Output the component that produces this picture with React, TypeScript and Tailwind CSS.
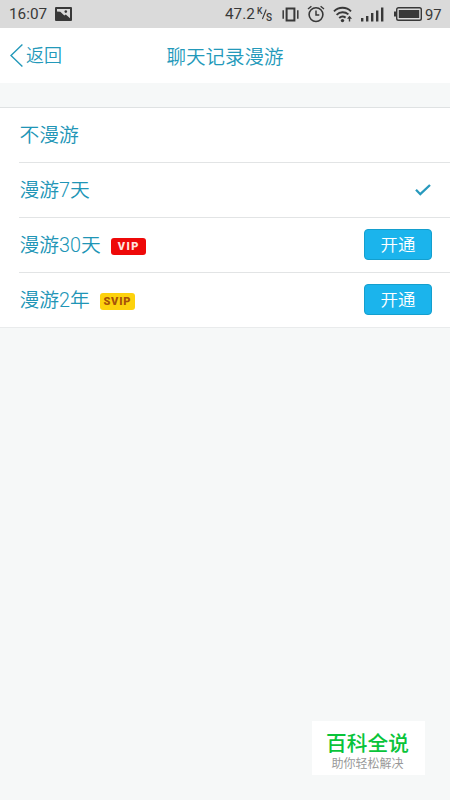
import type { ReactNode } from "react";

type RoamingOption = {
  label: string;
  selected?: boolean;
  badge?: "VIP" | "SVIP";
};

const OPTIONS: RoamingOption[] = [
  { label: "不漫游" },
  { label: "漫游7天", selected: true },
  { label: "漫游30天", badge: "VIP" },
  { label: "漫游2年", badge: "SVIP" },
];

function StatusBar() {
  return (
    <div className="flex h-7 items-center bg-[#dadada] text-[#383838] font-[Roboto,sans-serif]">
      <span className="ml-[9px] w-[38px] text-[15.3px] leading-7 whitespace-nowrap">16:07</span>
      {/* picture notification */}
      <svg className="ml-2 h-[14px] w-[17px]" viewBox="0 0 17 14">
        <rect width="17" height="14" rx="1" fill="#383838" />
        <path d="M2 2H15V11.2L10.8 7.6L9.3 8.6L5.3 4.8L2 4.6Z" fill="#dadada" />
        <circle cx="10.8" cy="4.6" r="1.3" fill="#383838" />
      </svg>
      <span className="ml-[153px] w-[30px] text-[15.3px] leading-7 whitespace-nowrap">47.2</span>
      {/* network speed unit */}
      <svg className="ml-[2px] h-4 w-4" viewBox="0 0 16 16" fill="#383838">
        <text x="0" y="8" fontSize="8.5" fontWeight="500">K</text>
        <path d="M9.2 3.5L5.4 13" stroke="#383838" strokeWidth="1.1" />
        <text x="9" y="14.5" fontSize="10" fontWeight="500">S</text>
      </svg>
      {/* vibrate */}
      <svg className="ml-[9px] h-[15px] w-[17px]" viewBox="0 0 17 15" fill="none" stroke="#383838">
        <rect x="4.6" y="1.5" width="7.8" height="12" strokeWidth="2" />
        <path d="M1.2 3.2V11.8M15.8 3.2V11.8" strokeWidth="1.5" />
      </svg>
      {/* alarm */}
      <svg className="ml-[8px] h-[18px] w-[18px]" viewBox="0 0 18 18" fill="none" stroke="#383838">
        <circle cx="9" cy="9.6" r="6.9" strokeWidth="1.6" />
        <path d="M9 5.6V10.1H12.3" strokeWidth="1.5" />
        <path d="M1 4L4.4 1.2M17 4L13.6 1.2" strokeWidth="1.4" />
      </svg>
      {/* wifi */}
      <svg className="ml-[8px] h-[17px] w-5" viewBox="0 0 20 17" fill="none" stroke="#383838">
        <path d="M1 5.4C5.5 0.6 13.5 0.6 18 5.4" strokeWidth="1.9" />
        <path d="M3.6 8.8C7 5.4 12 5.4 15.4 8.4" strokeWidth="1.9" />
        <path d="M6.2 12C8.2 10.2 10.6 10.2 12.6 11.6" strokeWidth="1.9" />
        <circle cx="9.5" cy="14.6" r="1.7" fill="#383838" stroke="none" />
        <path d="M16.5 11V15.5" strokeWidth="1.4" />
        <path d="M14 12.8L16.5 9.8L19 12.8Z" fill="#383838" stroke="none" />
      </svg>
      {/* signal */}
      <svg className="ml-[8px] h-[15px] w-[23px]" viewBox="0 0 23 15" fill="#383838">
        <rect x="0" y="11" width="2.4" height="3.5" />
        <rect x="5" y="9" width="2.4" height="5.5" />
        <rect x="10" y="6" width="2.4" height="8.5" />
        <rect x="15" y="3.5" width="2.4" height="11" />
        <rect x="20" y="0.5" width="2.4" height="14" />
      </svg>
      {/* battery */}
      <svg className="ml-[10px] h-[14px] w-7" viewBox="0 0 28 14" fill="#383838">
        <rect y="4.5" width="2" height="5" />
        <rect x="2.7" y="0.8" width="24.6" height="12.4" rx="1.8" fill="none" stroke="#383838" strokeWidth="1.4" />
        <rect x="4.8" y="3" width="20.4" height="8" />
      </svg>
      <span className="mt-px ml-[3px] text-[14.8px] leading-7">97</span>
    </div>
  );
}

function Header() {
  return (
    <header className="grid h-[55px] grid-cols-[1fr_auto_1fr] items-center bg-white text-[#2399ba]">
      <div className="flex items-center pl-[10px]">
        <svg className="h-[23px] w-[13px]" viewBox="0 0 13 23" fill="none" stroke="currentColor" strokeWidth="1.4">
          <path d="M12.4 0.5L1 11.5L12.4 22.5" />
        </svg>
        <span className="ml-[3px] text-[18px] leading-7">返回</span>
      </div>
      <h1 className="mt-[4px] text-[19.5px] leading-7">聊天记录漫游</h1>
    </header>
  );
}

function Badge({ kind }: { kind: "VIP" | "SVIP" }) {
  const colors = kind === "VIP" ? "bg-[#ee0909] text-[#ffe3df] tracking-[1.4px] pl-px" : "bg-[#fdd20d] text-[#a75309] tracking-[0.8px]";
  return (
    <span
      className={`mt-[2px] ml-[10px] flex h-[17px] w-[35px] items-center justify-center rounded-[3px] font-[Roboto,sans-serif] text-[11px] leading-none font-black ${colors}`}
    >
      {kind}
    </span>
  );
}

function Row({ label, badge, children }: { label: string; badge?: "VIP" | "SVIP"; children?: ReactNode }) {
  return (
    <li className="ml-[19px] flex h-[55px] items-center border-b border-[#e2e4e5] pr-[18px] last:h-[54px] last:border-b-0">
      <span className="mt-[2px] ml-[0.5px] text-[19.8px] leading-7 text-[#2095b6]">{label}</span>
      {badge && <Badge kind={badge} />}
      <div className="ml-auto">{children}</div>
    </li>
  );
}

export default function App() {
  return (
    <div className="relative h-[800px] w-[450px] overflow-hidden bg-[#f6f8f8] font-[350] font-[Roboto,'Noto_Sans_CJK_SC',sans-serif]">
      <div className="font-normal">
        <StatusBar />
      </div>
      <Header />
      <ul className="mt-[24px] border-t border-b border-t-[#dfe2e3] border-b-[#e9ebec] bg-white">
        {OPTIONS.map((option) => (
          <Row key={option.label} label={option.label} badge={option.badge}>
            {option.selected && (
              <svg className="mr-px h-3 w-4" viewBox="0 0 16 12" fill="none" stroke="#2799bd" strokeWidth="2.3">
                <path d="M1 5.8L5.3 10.2L15 1" />
              </svg>
            )}
            {option.badge && (
              <button className="-mt-px block h-[31px] w-[68px] rounded-[4px] border border-[#149fce] bg-[#1bb4ec] text-[17.5px] leading-[28px] text-white">
                开通
              </button>
            )}
          </Row>
        ))}
      </ul>
      {/* watermark */}
      <div className="absolute top-[721px] left-[312px] flex h-[54px] w-[113px] flex-col items-center bg-white pt-[8px] pr-[2px]">
        <div className="text-[20.7px] leading-[30px] font-medium text-[#09c43a]">百科全说</div>
        <div className="-mt-[4px] text-[12px] leading-[18px] font-normal text-[#999]">助你轻松解决</div>
      </div>
    </div>
  );
}
